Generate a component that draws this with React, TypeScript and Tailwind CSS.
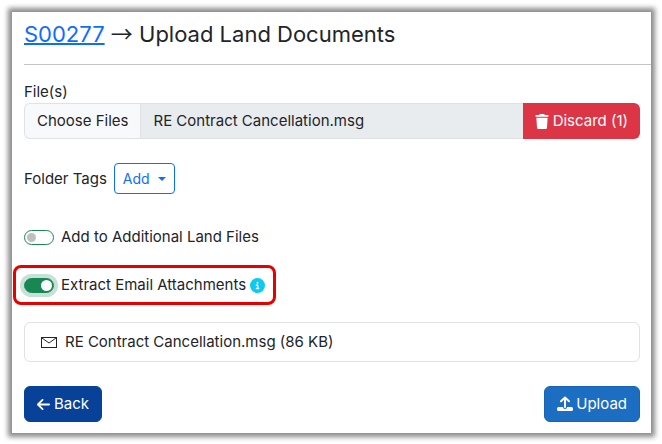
import { useState } from "react";
import { FaArrowLeft, FaCircleInfo, FaTrash } from "react-icons/fa6";

function UploadIcon() {
  return (
    <svg viewBox="0 0 16 16" className="h-4 w-4" fill="none" aria-hidden="true">
      <path
        d="M8 11V1.500M4 5.200L8 1.500l4 3.700"
        stroke="currentColor"
        strokeWidth="2"
        strokeLinecap="round"
        strokeLinejoin="round"
      />
      <path
        d="M1.500 11h4.500a2 2 0 0 0 4 0h4.500a1.500 1.500 0 0 1 1.500 1.500v1a1.500 1.500 0 0 1-1.500 1.500h-13A1.500 1.500 0 0 1 0 13.500v-1A1.500 1.500 0 0 1 1.500 11z"
        fill="currentColor"
      />
    </svg>
  );
}

function EnvelopeIcon() {
  return (
    <svg viewBox="0 0 16 12" className="h-3 w-4" fill="none" aria-hidden="true">
      <rect x="0.500" y="1.500" width="15" height="10" stroke="#212529" />
      <path d="M1 2l7 5 7-5" stroke="#212529" />
    </svg>
  );
}

type SwitchProps = {
  id: string;
  label: string;
  checked: boolean;
  onChange: (checked: boolean) => void;
  highlighted?: boolean;
};

function Switch({ id, label, checked, onChange, highlighted }: SwitchProps) {
  return (
    <div className="flex items-center gap-[7px]">
      <span
        className={
          highlighted
            ? "relative flex h-[15px] w-[30px] rounded-full ring-4 ring-[#c6e1d5]"
            : "relative flex h-[15px] w-[30px] rounded-full"
        }
      >
        <input
          id={id}
          type="checkbox"
          role="switch"
          checked={checked}
          onChange={(e) => onChange(e.target.checked)}
          className="peer h-full w-full cursor-pointer appearance-none rounded-full border border-[#198754] bg-white outline-none checked:bg-[#198754]"
        />
        <span className="pointer-events-none absolute top-[3px] left-[3px] h-[9px] w-[9px] rounded-full bg-[#bfbfbf] peer-checked:top-[2px] peer-checked:left-[17px] peer-checked:h-[11px] peer-checked:w-[11px] peer-checked:bg-white" />
      </span>
      <label htmlFor={id}>{label}</label>
    </div>
  );
}

export default function App() {
  const [additional, setAdditional] = useState(false);
  const [extract, setExtract] = useState(true);

  return (
    <div className="bg-white pt-3 pr-[11px] pb-[11px] pl-3 font-['Inter',sans-serif] text-[15px] leading-[22px] text-[#212529]">
      <main className="bg-white pb-[11px] shadow-[0_0_5px_4px_#8c8c8c]">
        <header className="ml-3 border-b border-[#c4c5c6] pt-2 pb-4">
          <h1 className="text-[22px] leading-7">
            <a href="#S00277" className="text-[#0d6efd] underline decoration-2">
              S00277
            </a>{" "}
            <span className="font-['Noto_Sans_CJK_SC',sans-serif] leading-none">→</span> Upload Land
            Documents
          </h1>
        </header>

        <form className="pr-[11px] pl-3" onSubmit={(e) => e.preventDefault()}>
          <div className="pt-4">
            <label htmlFor="files" className="block">
              File(s)
            </label>
            <div className="flex h-9">
              <label
                htmlFor="files"
                className="flex flex-1 cursor-pointer overflow-hidden rounded-l-md border border-r-0 border-[#dee2e6] bg-[#e9ecef]"
              >
                <span className="flex items-center border-r border-[#dee2e6] bg-[#f8f9fa] px-3">
                  Choose Files
                </span>
                <span className="flex items-center px-3">RE Contract Cancellation.msg</span>
              </label>
              <input id="files" type="file" multiple className="sr-only" />
              <button
                type="button"
                className="flex items-center gap-1 rounded-r-md bg-[#dc3545] px-3 text-white"
              >
                <FaTrash className="h-[15px] w-[14px]" />
                Discard (1)
              </button>
            </div>
          </div>

          <div className="mt-6 flex items-center gap-[7px]">
            <span>Folder Tags</span>
            <button
              type="button"
              className="flex h-[31px] items-center gap-2 rounded border border-[#0d6efd] px-2 text-sm text-[#0d6efd]"
            >
              Add
              <span className="border-x-4 border-t-4 border-x-transparent border-t-[#0d6efd]" />
            </button>
          </div>

          <div className="mt-8">
            <Switch
              id="additional"
              label="Add to Additional Land Files"
              checked={additional}
              onChange={setAdditional}
            />
          </div>

          <div className="mt-[17px] -ml-[11px] flex h-10 w-fit items-center gap-1 rounded-lg border-3 border-[#e60000] px-2">
            <Switch
              id="extract"
              label="Extract Email Attachments"
              checked={extract}
              onChange={setExtract}
              highlighted
            />
            <FaCircleInfo className="h-[15px] w-[15px] text-[#0dcaf0]" />
          </div>

          <ul className="mt-[17px] rounded-md border border-[#dee2e6]">
            <li className="flex items-center gap-2 px-4 py-2">
              <EnvelopeIcon />
              RE Contract Cancellation.msg (86 KB)
            </li>
          </ul>

          <div className="mt-6 flex justify-between">
            <button
              type="button"
              className="flex h-9 items-center gap-1 rounded-md border border-[#084298] bg-[#084298] px-3 text-white"
            >
              <FaArrowLeft className="h-[15px] w-[13px]" />
              Back
            </button>
            <button
              type="submit"
              className="flex h-9 items-center gap-[3px] rounded-md border border-[#1a62b3] bg-[#1b6ec2] px-3 text-white"
            >
              <UploadIcon />
              Upload
            </button>
          </div>
        </form>
      </main>
    </div>
  );
}
